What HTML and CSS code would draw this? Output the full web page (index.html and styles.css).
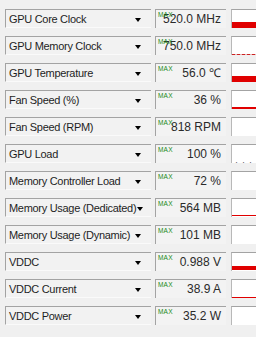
FILE: index.html
```html
<!DOCTYPE html>
<html lang="en">
<head>
    <meta charset="UTF-8">
    <title>Sensors</title>
    <link rel="stylesheet" href="styles.css">
</head>
<body>
    <div class="sensors">
        <div class="row">
            <div class="label"><span>GPU Core Clock</span><i class="arrow"></i></div>
            <div class="value"><b class="max">MAX</b>520.0 MHz</div>
            <div class="graph"><div class="bar" style="height: 6px"></div></div>
        </div>
        <div class="row">
            <div class="label"><span>GPU Memory Clock</span><i class="arrow"></i></div>
            <div class="value"><b class="max">MAX</b>750.0 MHz</div>
            <div class="graph"><div class="bar dashed" style="height: 1px"></div></div>
        </div>
        <div class="row">
            <div class="label"><span>GPU Temperature</span><i class="arrow"></i></div>
            <div class="value"><b class="max">MAX</b>56.0 &#8451;</div>
            <div class="graph"><div class="bar" style="height: 6px"></div></div>
        </div>
        <div class="row">
            <div class="label"><span>Fan Speed (%)</span><i class="arrow"></i></div>
            <div class="value"><b class="max">MAX</b>36 %</div>
            <div class="graph"><div class="bar" style="height: 2px"></div></div>
        </div>
        <div class="row">
            <div class="label"><span>Fan Speed (RPM)</span><i class="arrow"></i></div>
            <div class="value"><b class="max">MAX</b>818 RPM</div>
            <div class="graph"></div>
        </div>
        <div class="row">
            <div class="label"><span>GPU Load</span><i class="arrow"></i></div>
            <div class="value"><b class="max">MAX</b>100 %</div>
            <div class="graph"><div class="dots">. . .</div></div>
        </div>
        <div class="row">
            <div class="label"><span>Memory Controller Load</span><i class="arrow"></i></div>
            <div class="value"><b class="max">MAX</b>72 %</div>
            <div class="graph"></div>
        </div>
        <div class="row">
            <div class="label"><span>Memory Usage (Dedicated)</span><i class="arrow"></i></div>
            <div class="value"><b class="max">MAX</b>564 MB</div>
            <div class="graph"><div class="bar" style="height: 1px"></div><div class="gap"></div></div>
        </div>
        <div class="row">
            <div class="label"><span>Memory Usage (Dynamic)</span><i class="arrow"></i></div>
            <div class="value"><b class="max">MAX</b>101 MB</div>
            <div class="graph"></div>
        </div>
        <div class="row">
            <div class="label"><span>VDDC</span><i class="arrow"></i></div>
            <div class="value"><b class="max">MAX</b>0.988 V</div>
            <div class="graph"><div class="bar" style="height: 4px"></div><div class="gap"></div></div>
        </div>
        <div class="row">
            <div class="label"><span>VDDC Current</span><i class="arrow"></i></div>
            <div class="value"><b class="max">MAX</b>38.9 A</div>
            <div class="graph"><div class="bar" style="height: 1px"></div></div>
        </div>
        <div class="row">
            <div class="label"><span>VDDC Power</span><i class="arrow"></i></div>
            <div class="value"><b class="max">MAX</b>35.2 W</div>
            <div class="graph"></div>
        </div>
    </div>
</body>
</html>
```

FILE: styles.css
```css
body {
    margin: 0;
    background: #f0f0f0;
    font-family: "Liberation Sans", Arial, sans-serif;
    color: #1e1e1e;
    overflow: hidden;
}

.sensors {
    padding: 9px 0 0 5px;
    display: flex;
    flex-direction: column;
    gap: 8px;
}

.row {
    display: flex;
    height: 19px;
}

.label {
    width: 146px;
    box-sizing: border-box;
    border-top: 1px solid #a3a3a3;
    border-left: 1px solid #a3a3a3;
    border-bottom: 1px solid #fafafa;
    background: #f2f2f2;
    display: flex;
    align-items: center;
    padding-left: 3px;
    font-size: 11px;
    letter-spacing: -0.3px;
    white-space: nowrap;
}

.label span {
    flex: 1;
}

.arrow {
    width: 0;
    height: 0;
    border-left: 3.5px solid transparent;
    border-right: 3.5px solid transparent;
    border-top: 4px solid #000;
    margin: 2px 10px 0 1px;
}

.value {
    width: 71px;
    margin-left: 4px;
    box-sizing: border-box;
    border-top: 1px solid #a3a3a3;
    border-left: 1px solid #a3a3a3;
    background: #f3f3f3;
    position: relative;
    text-align: right;
    padding-right: 5px;
    font-size: 12px;
    line-height: 18px;
    color: #2a2a2a;
}

.max {
    position: absolute;
    left: 2px;
    top: 1px;
    font-size: 6.5px;
    line-height: 7px;
    font-weight: normal;
    color: #1a8a1a;
    letter-spacing: 0.2px;
}

.graph {
    flex: 1;
    margin-left: 5px;
    border-top: 1px solid #a3a3a3;
    border-left: 1px solid #b8b8b8;
    background: #fff;
    display: flex;
    flex-direction: column;
    justify-content: flex-end;
}

.bar {
    background: #e00000;
}

.bar.dashed {
    background: repeating-linear-gradient(90deg, #c22 0 3px, #e8b0b0 3px 5px);
}

.gap {
    height: 1px;
}

.dots {
    font-size: 9px;
    line-height: 6px;
    text-align: center;
    color: #555;
    letter-spacing: 1px;
}
```
